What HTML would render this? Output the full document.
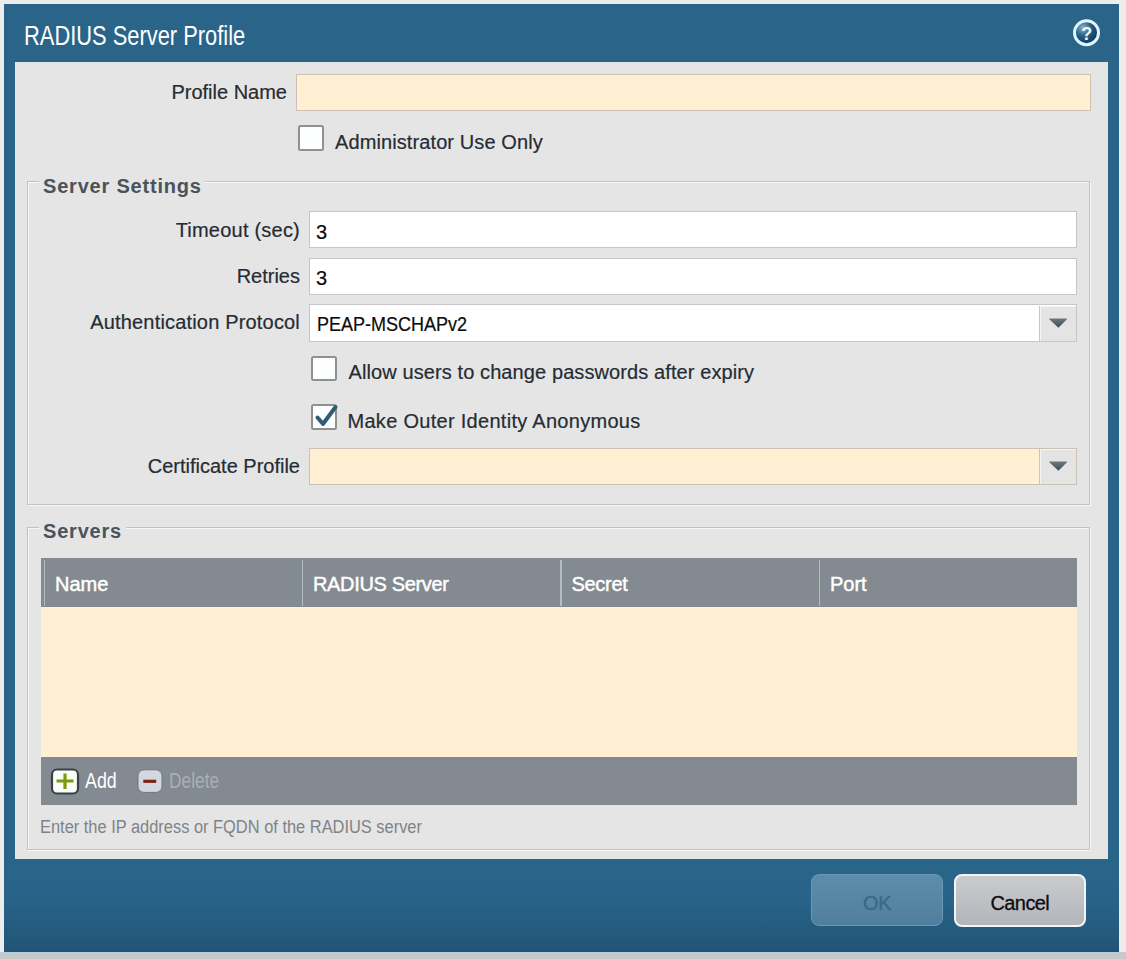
<!DOCTYPE html>
<html><head><meta charset="utf-8">
<style>
*{box-sizing:border-box;margin:0;padding:0}
html,body{width:1126px;height:959px;overflow:hidden;background:#ececec;font-family:"Liberation Sans",sans-serif;position:relative}
.a{position:absolute}
.t{position:absolute;white-space:nowrap;line-height:1;font-size:20px}
#dlg{left:4px;top:4px;width:1115px;height:948px;background:linear-gradient(#2a6589 0px,#286589 875px,#276388 895px,#235a7d 930px,#215474 947px)}
#panel{left:15px;top:62px;width:1093px;height:797px;background:#e5e5e5;box-shadow:0 1px 0 #3d5f7c}
.lbl{color:#262c33;text-align:right;-webkit-text-stroke:0.2px #262c33}
.val{color:#0c0c0c;-webkit-text-stroke:0.2px #0c0c0c}
.inp{background:#fff;border:1.5px solid #c6c6c6}
.yel{background:#fff0d3;border:1.5px solid #cbc2b3}
.cb{border:2px solid #8f9191;border-radius:2.5px;background:#fcfeff}
.fs{border:1.5px solid #c2c2c2;box-shadow:inset 1px 1px 0 #f7f7f7,1px 1px 0 #f7f7f7}
.leg{font-weight:bold;color:#4b535a;letter-spacing:0.8px}
.legbg{background:#e5e5e5}
.hdr{color:#fff;-webkit-text-stroke:0.45px #fff}
.ddbtn{background:#e4e4e4;border-left:1.5px solid #c6c6c6;box-shadow:inset 1px 1px 0 #f4f4f4}
.col{width:1.5px;background:#b4bcc5}
</style></head>
<body>
<div class="a" style="left:0;top:952px;width:1126px;height:7px;background:linear-gradient(#b9ccd8,#c6c8ca 3px,#c8c8c8)"></div>
<div id="dlg" class="a"></div>
<div class="t" style="left:24px;top:23px;font-size:27px;color:#fff;transform-origin:0 0;transform:scaleX(0.81)">RADIUS Server Profile</div>
<!-- help icon -->
<svg class="a" style="left:1072px;top:18px" width="30" height="30" viewBox="0 0 30 30">
  <defs><radialGradient id="hg" cx="0.35" cy="0.3" r="0.75"><stop offset="0" stop-color="#8fb4cf"/><stop offset="0.45" stop-color="#235f86"/><stop offset="1" stop-color="#0a3558"/></radialGradient></defs>
  <circle cx="14.5" cy="14.7" r="12" fill="url(#hg)" stroke="#dff6ff" stroke-width="3"/>
  <text x="14.8" y="21.5" text-anchor="middle" font-family="Liberation Sans" font-weight="bold" font-size="18" fill="#eef8ff">?</text>
</svg>
<div id="panel" class="a"></div>

<div class="t lbl" style="left:87px;top:82px;width:200px">Profile Name</div>
<div class="a yel" style="left:296px;top:74px;width:795px;height:37px"></div>
<div class="a cb" style="left:297.5px;top:125px;width:26px;height:26px"></div>
<div class="t lbl" style="left:335px;top:132px;letter-spacing:0.1px">Administrator Use Only</div>

<!-- Server Settings fieldset -->
<div class="a fs" style="left:27px;top:181px;width:1063px;height:324px"></div>
<div class="a legbg" style="left:39px;top:172px;width:166px;height:14px"></div>
<div class="t leg" style="left:43px;top:176px">Server Settings</div>
<div class="t lbl" style="left:100px;top:220px;width:200px;letter-spacing:0.22px">Timeout (sec)</div>
<div class="a inp" style="left:309px;top:211px;width:768px;height:37px"></div>
<div class="t val" style="left:316px;top:222px">3</div>
<div class="t lbl" style="left:100px;top:266px;width:200px">Retries</div>
<div class="a inp" style="left:309px;top:258px;width:768px;height:37px"></div>
<div class="t val" style="left:316px;top:268px">3</div>
<div class="t lbl" style="left:50px;top:312px;width:250px;letter-spacing:0.18px">Authentication Protocol</div>
<div class="a inp" style="left:309px;top:304px;width:768px;height:38px"></div>
<div class="t val" style="left:317px;top:314px;transform-origin:0 0;transform:scaleX(0.9)">PEAP-MSCHAPv2</div>
<div class="a ddbtn" style="left:1039px;top:305.5px;width:36.5px;height:35px"></div>
<svg class="a" style="left:1047px;top:317px" width="22" height="12" viewBox="0 0 22 12"><defs><linearGradient id="ag" x1="0" y1="0" x2="0" y2="1"><stop offset="0" stop-color="#6e7880"/><stop offset="1" stop-color="#3f4a50"/></linearGradient></defs><path d="M2.3 2.2 Q1.5 1.5 2.8 1.5 L19.5 1.5 Q20.8 1.5 20 2.2 L11.4 10.8 Z" fill="url(#ag)"/></svg>
<div class="a cb" style="left:311px;top:356px;width:25.5px;height:25px"></div>
<div class="t lbl" style="left:348.5px;top:362px;letter-spacing:0.1px">Allow users to change passwords after expiry</div>
<div class="a cb" style="left:311px;top:404px;width:25.5px;height:25.5px"></div>
<svg class="a" style="left:311px;top:403px" width="30" height="30" viewBox="0 0 30 30"><path d="M6.5 14.5 L12 21 L24.5 4" fill="none" stroke="#2f5d72" stroke-width="4" stroke-linecap="round" stroke-linejoin="round"/></svg>
<div class="t lbl" style="left:347.5px;top:410.5px;letter-spacing:0.29px">Make Outer Identity Anonymous</div>
<div class="t lbl" style="left:100px;top:455.5px;width:200px">Certificate Profile</div>
<div class="a yel" style="left:309px;top:447.5px;width:768px;height:37.5px"></div>
<div class="a ddbtn" style="left:1039px;top:449px;width:36.5px;height:34.5px"></div>
<svg class="a" style="left:1047px;top:460px" width="22" height="12" viewBox="0 0 22 12"><path d="M2.3 2.2 Q1.5 1.5 2.8 1.5 L19.5 1.5 Q20.8 1.5 20 2.2 L11.4 10.8 Z" fill="url(#ag)"/></svg>

<!-- Servers fieldset -->
<div class="a fs" style="left:27px;top:527px;width:1063px;height:323px"></div>
<div class="a legbg" style="left:39px;top:518px;width:87px;height:14px"></div>
<div class="t leg" style="left:43px;top:520.5px">Servers</div>
<div class="a" style="left:40.5px;top:557.5px;width:1036.5px;height:49.5px;background:#838a91"></div>
<div class="a col" style="left:43.5px;top:560px;height:46px"></div>
<div class="a col" style="left:301.5px;top:560px;height:46px"></div>
<div class="a col" style="left:560px;top:560px;height:46px"></div>
<div class="a col" style="left:818.5px;top:560px;height:46px"></div>
<div class="t hdr" style="left:55px;top:574px">Name</div>
<div class="t hdr" style="left:313px;top:574px;letter-spacing:-0.35px">RADIUS Server</div>
<div class="t hdr" style="left:571.5px;top:574px;letter-spacing:-0.3px">Secret</div>
<div class="t hdr" style="left:830px;top:574px">Port</div>
<div class="a" style="left:40.5px;top:607px;width:1036.5px;height:150px;background:#fff0d3"></div>
<div class="a" style="left:40.5px;top:757px;width:1036.5px;height:48px;background:#838a91"></div>
<svg class="a" style="left:50px;top:767px" width="30" height="28" viewBox="0 0 30 28"><rect x="2" y="2.5" width="26" height="24" rx="5" fill="#fbfdf8" stroke="#3b4045" stroke-width="2.2"/><path d="M6.5 14 H23.5 M15 6.5 V22" stroke="#799a0f" stroke-width="3.2"/></svg>
<div class="t hdr" style="left:85px;top:770px;font-size:22px;-webkit-text-stroke:0;transform-origin:0 0;transform:scaleX(0.81)">Add</div>
<svg class="a" style="left:136px;top:768px" width="28" height="26" viewBox="0 0 28 26"><rect x="2" y="1.8" width="24" height="22.6" rx="6" fill="#d2d8de" stroke="#6f767d" stroke-width="1"/><path d="M7.3 13.3 H20.2" stroke="#7d2414" stroke-width="3.2"/></svg>
<div class="t hdr" style="left:169px;top:770px;font-size:22px;-webkit-text-stroke:0;color:#a9afb5;transform-origin:0 0;transform:scaleX(0.79)">Delete</div>
<div class="t" style="left:40px;top:817.5px;font-size:18px;color:#7f8387;transform-origin:0 0;transform:scaleX(0.912)">Enter the IP address or FQDN of the RADIUS server</div>

<!-- buttons -->
<div class="a" style="left:810.5px;top:874px;width:132px;height:52px;border-radius:8px;background:linear-gradient(#5e8cab,#507f9e);border:1px solid #6b97b4"></div>
<div class="t" style="left:863px;top:892.5px;color:#3c6886;letter-spacing:-0.3px;-webkit-text-stroke:0.4px #3c6886">OK</div>
<div class="a" style="left:953.5px;top:874px;width:132px;height:52.5px;border-radius:8px;background:linear-gradient(#cacbcf,#b3b5ba);border:2.5px solid #f2f5f8"></div>
<div class="t" style="left:990.5px;top:892.5px;color:#0d0d0d;letter-spacing:-0.6px;-webkit-text-stroke:0.3px #0d0d0d">Cancel</div>
</body></html>
